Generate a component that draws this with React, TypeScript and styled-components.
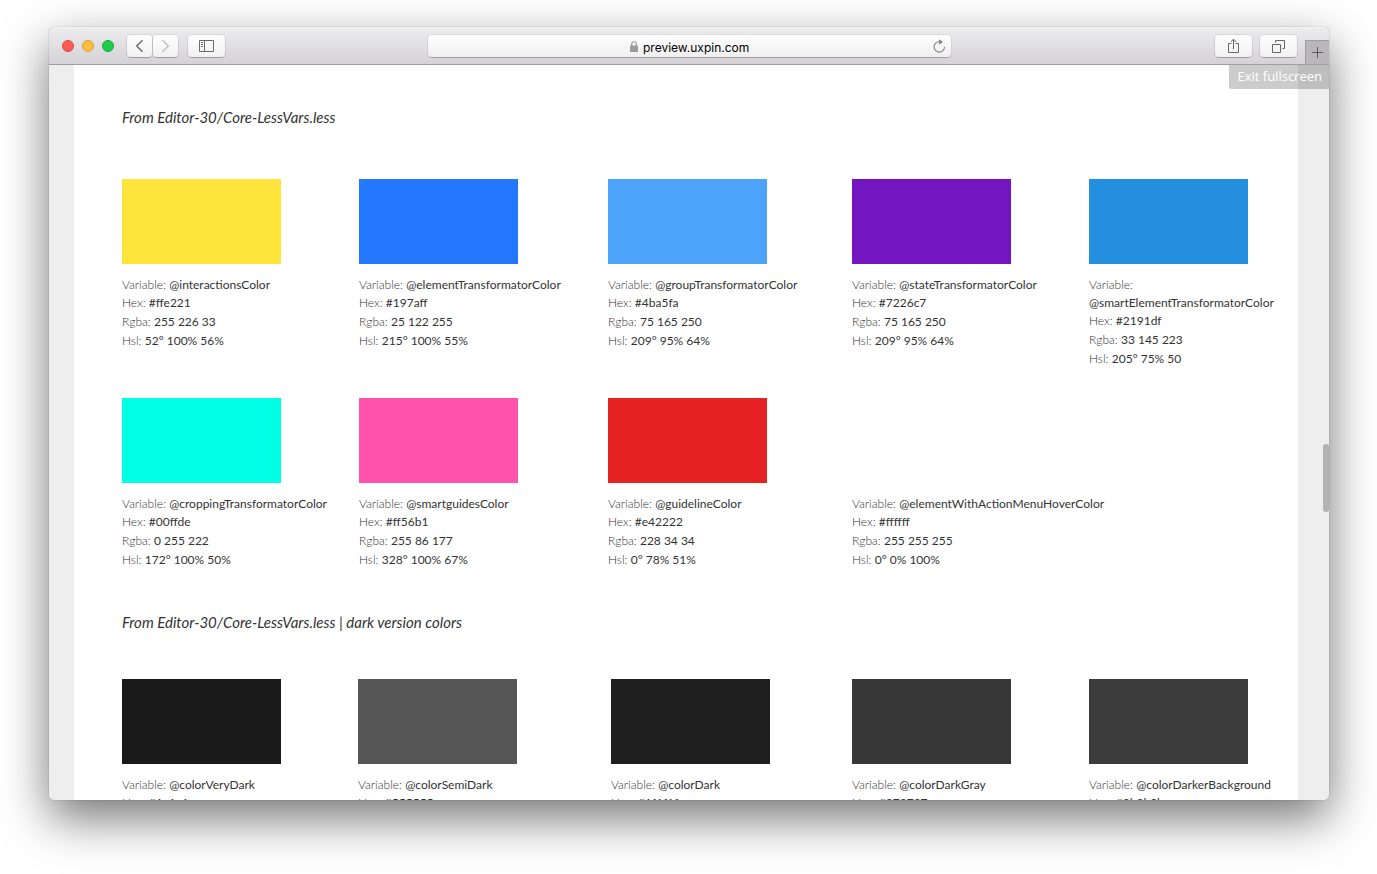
import React from 'react';
import styled, { createGlobalStyle } from 'styled-components';

const GlobalStyle = createGlobalStyle`
  * { box-sizing: border-box; }
  body { margin: 0; background: #fff; }
`;

const Desktop = styled.div`
  display: flex;
  height: 100vh;
  padding: 27px 48px 74px 49px;
  overflow: hidden;
`;

const BrowserWindow = styled.div`
  flex: 1;
  min-width: 0;
  display: flex;
  flex-direction: column;
  border-radius: 5px;
  background: #eee;
  box-shadow: 0 0 1px rgba(0, 0, 0, 0.6), 0 18px 48px rgba(0, 0, 0, 0.55);
  overflow: hidden;
`;

const Toolbar = styled.header`
  display: grid;
  grid-template-columns: 1fr minmax(0, 523px) 1fr;
  align-items: center;
  height: 38px;
  flex: none;
  border-top: 1px solid #f6f5f6;
  border-bottom: 1px solid #9f9d9f;
  background: linear-gradient(#ecebed, #d4d2d5);
`;

const ToolbarStart = styled.div`
  display: flex;
  align-items: center;
  padding-left: 13px;
`;

const ToolbarEnd = styled.div`
  display: flex;
  align-items: center;
  justify-content: flex-end;
  gap: 8px;
  height: 100%;
`;

const Lights = styled.div`
  display: flex;
  gap: 8px;
  margin-right: 13px;
`;

const Light = styled.button<{ $fill: string; $edge: string }>`
  width: 12px;
  height: 12px;
  padding: 0;
  border: 1px solid ${(p) => p.$edge};
  border-radius: 50%;
  background: ${(p) => p.$fill};
`;

const ToolButton = styled.button<{ $width: number }>`
  display: flex;
  align-items: center;
  justify-content: center;
  width: ${(p) => p.$width}px;
  height: 22px;
  padding: 0;
  border: 0;
  border-radius: 4px;
  background: linear-gradient(#fefefe, #f2f1f2);
  box-shadow: 0 0 0 1px rgba(0, 0, 0, 0.08), 0 1px 0 rgba(0, 0, 0, 0.2);
`;

const NavButtons = styled.div`
  display: flex;
  gap: 1px;
  margin-right: 10px;
`;

const NewTab = styled.button`
  display: flex;
  align-items: center;
  justify-content: center;
  align-self: flex-end;
  width: 24px;
  height: 24px;
  padding: 0;
  border: 1px solid #9f9d9f;
  border-width: 1px 0 0 1px;
  background: #b9b7ba;
`;

const AddressBar = styled.div`
  display: grid;
  grid-template-columns: 20px 1fr 18px;
  align-items: center;
  height: 22px;
  border-radius: 4px;
  background: linear-gradient(#fefefe, #efeff0);
  box-shadow: 0 0 0 1px rgba(0, 0, 0, 0.06), 0 1px 0 rgba(0, 0, 0, 0.2);
`;

const Location = styled.label`
  grid-column: 2;
  display: flex;
  align-items: center;
  justify-content: center;
  gap: 5px;
`;

const LocationInput = styled.input`
  width: 107px;
  height: 20px;
  padding: 2px 0 0;
  border: 0;
  outline: 0;
  background: transparent;
  color: #000;
  font: 12px/18px Inter, sans-serif;
`;

const ReloadButton = styled.button`
  display: flex;
  padding: 0;
  border: 0;
  background: none;
`;

const Viewport = styled.div`
  position: relative;
  flex: 1;
  min-height: 0;
  padding: 0 31px 0 25px;
  background: #eee;
  overflow: hidden;
`;

const Sheet = styled.main`
  min-height: 100%;
  padding: 42px 0 0 48px;
  background: #fff;
  font-family: Lato, sans-serif;
`;

const Section = styled.section`
  margin-bottom: 43px;
`;

const SectionTitle = styled.h2<{ $gap: number }>`
  margin: 0 0 ${(p) => p.$gap}px;
  color: #333;
  font-size: 15px;
  font-style: italic;
  font-weight: 400;
  line-height: 20px;
`;

const SwatchGrid = styled.div<{ $columns: string }>`
  display: grid;
  grid-template-columns: ${(p) => p.$columns};
  row-gap: 30px;
`;

const SwatchCard = styled.article`
  min-width: 0;
`;

const Swatch = styled.div<{ $color: string }>`
  width: 159px;
  height: 85px;
  margin-bottom: 12px;
  background: ${(p) => p.$color};
`;

const Line = styled.p<{ $spaced?: boolean; $nowrap?: boolean }>`
  margin: ${(p) => (p.$spaced ? '1px' : '0')} 0 0;
  color: #333;
  font-size: 12px;
  font-weight: 300;
  line-height: 18px;
  white-space: ${(p) => (p.$nowrap ? 'nowrap' : 'normal')};
`;

const Value = styled.span`
  color: #333;
  font-weight: 400;
  white-space: nowrap;
`;

const ExitFullscreen = styled.button`
  position: absolute;
  top: 0;
  right: 0;
  height: 24px;
  padding: 0 7px 2px 8px;
  border: 0;
  border-radius: 0 0 0 2px;
  background: rgba(0, 0, 0, 0.2);
  color: #fff;
  font: 13px/22px 'Open Sans', sans-serif;
`;

const ScrollThumb = styled.div`
  position: absolute;
  top: 51.5%;
  right: 0;
  width: 6px;
  height: 68px;
  border-radius: 3px;
  background: #b2b2b2;
`;

type Color = { name: string; hex: string; rgba?: string; hsl?: string; fill: string; nowrap?: boolean };

const coreColors: Color[] = [
  { name: '@interactionsColor', hex: '#ffe221', rgba: '255 226 33', hsl: '52° 100% 56%', fill: '#ffe43c' },
  { name: '@elementTransformatorColor', hex: '#197aff', rgba: '25 122 255', hsl: '215° 100% 55%', fill: '#2378ff' },
  { name: '@groupTransformatorColor', hex: '#4ba5fa', rgba: '75 165 250', hsl: '209° 95% 64%', fill: '#4da2f9' },
  { name: '@stateTransformatorColor', hex: '#7226c7', rgba: '75 165 250', hsl: '209° 95% 64%', fill: '#7316c1' },
  { name: '@smartElementTransformatorColor', hex: '#2191df', rgba: '33 145 223', hsl: '205° 75% 50', fill: '#258fdf' },
  { name: '@croppingTransformatorColor', hex: '#00ffde', rgba: '0 255 222', hsl: '172° 100% 50%', fill: '#00ffe3' },
  { name: '@smartguidesColor', hex: '#ff56b1', rgba: '255 86 177', hsl: '328° 100% 67%', fill: '#ff52ad' },
  { name: '@guidelineColor', hex: '#e42222', rgba: '228 34 34', hsl: '0° 78% 51%', fill: '#e52122' },
  { name: '@elementWithActionMenuHoverColor', hex: '#ffffff', rgba: '255 255 255', hsl: '0° 0% 100%', fill: '#fff', nowrap: true },
];

const darkColors: Color[] = [
  { name: '@colorVeryDark', hex: '#1a1a1a', fill: '#1a1a1a' },
  { name: '@colorSemiDark', hex: '#555555', fill: '#555' },
  { name: '@colorDark', hex: '#1f1f1f', fill: '#1f1f1f' },
  { name: '@colorDarkGray', hex: '#373737', fill: '#373737' },
  { name: '@colorDarkerBackground', hex: '#3b3b3b', fill: '#3b3b3b' },
];

function ColorCard({ color }: { color: Color }) {
  return (
    <SwatchCard>
      <Swatch $color={color.fill} />
      <Line $nowrap={color.nowrap}>Variable: <Value>{color.name}</Value></Line>
      <Line>Hex: <Value>{color.hex}</Value></Line>
      {color.rgba && <Line $spaced>Rgba: <Value>{color.rgba}</Value></Line>}
      {color.hsl && <Line $spaced>Hsl: <Value>{color.hsl}</Value></Line>}
    </SwatchCard>
  );
}

export default function App() {
  return (
    <>
      <GlobalStyle />
      <Desktop>
        <BrowserWindow>
          <Toolbar>
            <ToolbarStart>
              <Lights>
                <Light aria-label="Close" $fill="#fc5b57" $edge="#e2443f" />
                <Light aria-label="Minimize" $fill="#fdbe41" $edge="#e0a033" />
                <Light aria-label="Zoom" $fill="#1ecb4c" $edge="#12ab38" />
              </Lights>
              <NavButtons>
                <ToolButton $width={25} aria-label="Back">
                  <svg width="9" height="14" viewBox="0 0 9 14" fill="none" stroke="#6f6f6f" strokeWidth="1.5">
                    <path d="M7.5 1.2 1.7 7l5.8 5.8" />
                  </svg>
                </ToolButton>
                <ToolButton $width={25} aria-label="Forward">
                  <svg width="9" height="14" viewBox="0 0 9 14" fill="none" stroke="#c2c2c2" strokeWidth="1.5">
                    <path d="M1.5 1.2 7.3 7l-5.8 5.8" />
                  </svg>
                </ToolButton>
              </NavButtons>
              <ToolButton $width={37} aria-label="Show sidebar">
                <svg width="15" height="12" viewBox="0 0 15 12" fill="none" stroke="#6a6a6a">
                  <path d="M.5.5h14v11H.5zM5.5.5v11M2 2.5h2M2 4.5h2M2 6.5h2" />
                </svg>
              </ToolButton>
            </ToolbarStart>
            <AddressBar>
              <Location>
                <svg width="8" height="11" viewBox="0 0 8 11" fill="none">
                  <path d="M1.7 5V3a2.3 2.3 0 0 1 4.6 0v2" stroke="#9b9b9b" strokeWidth="1.1" />
                  <rect y="4.5" width="8" height="6.5" rx=".6" fill="#9b9b9b" />
                </svg>
                <LocationInput aria-label="Address" defaultValue="preview.uxpin.com" />
              </Location>
              <ReloadButton aria-label="Reload">
                <svg width="13" height="15" viewBox="0 0 13 15" fill="none">
                  <path d="M6.2 2.7a5.2 5.2 0 1 0 5.3 5.2" stroke="#808080" strokeWidth="1.1" />
                  <path d="M6 .2 10 2.9 6 5.6z" fill="#808080" />
                </svg>
              </ReloadButton>
            </AddressBar>
            <ToolbarEnd>
              <ToolButton $width={37} aria-label="Share">
                <svg width="11" height="16" viewBox="0 0 11 16" fill="none" stroke="#666">
                  <path d="M3.5 5.5h-3v9h10v-9h-3M5.5 11V1.2M2.7 4l2.8-2.8L8.3 4" />
                </svg>
              </ToolButton>
              <ToolButton $width={37} aria-label="Show all tabs">
                <svg width="13" height="13" viewBox="0 0 13 13" fill="none" stroke="#666">
                  <path d="M.5 4.5h8v8h-8zM3.5 2.5v-2h9v8h-2" />
                </svg>
              </ToolButton>
              <NewTab aria-label="New tab">
                <svg width="11" height="11" viewBox="0 0 11 11" stroke="#5c5b5d">
                  <path d="M5.5 0v11M0 5.5h11" />
                </svg>
              </NewTab>
            </ToolbarEnd>
          </Toolbar>
          <Viewport>
            <Sheet>
              <Section>
                <SectionTitle $gap={52}>From Editor-30/Core-LessVars.less</SectionTitle>
                <SwatchGrid $columns="237fr 249fr 244fr 237fr 209fr">
                  {coreColors.map((c) => <ColorCard key={c.name} color={c} />)}
                </SwatchGrid>
              </Section>
              <Section>
                <SectionTitle $gap={47}>From Editor-30/Core-LessVars.less | dark version colors</SectionTitle>
                <SwatchGrid $columns="236fr 253fr 241fr 237fr 209fr">
                  {darkColors.map((c) => <ColorCard key={c.name} color={c} />)}
                </SwatchGrid>
              </Section>
            </Sheet>
            <ExitFullscreen>Exit fullscreen</ExitFullscreen>
            <ScrollThumb />
          </Viewport>
        </BrowserWindow>
      </Desktop>
    </>
  );
}
